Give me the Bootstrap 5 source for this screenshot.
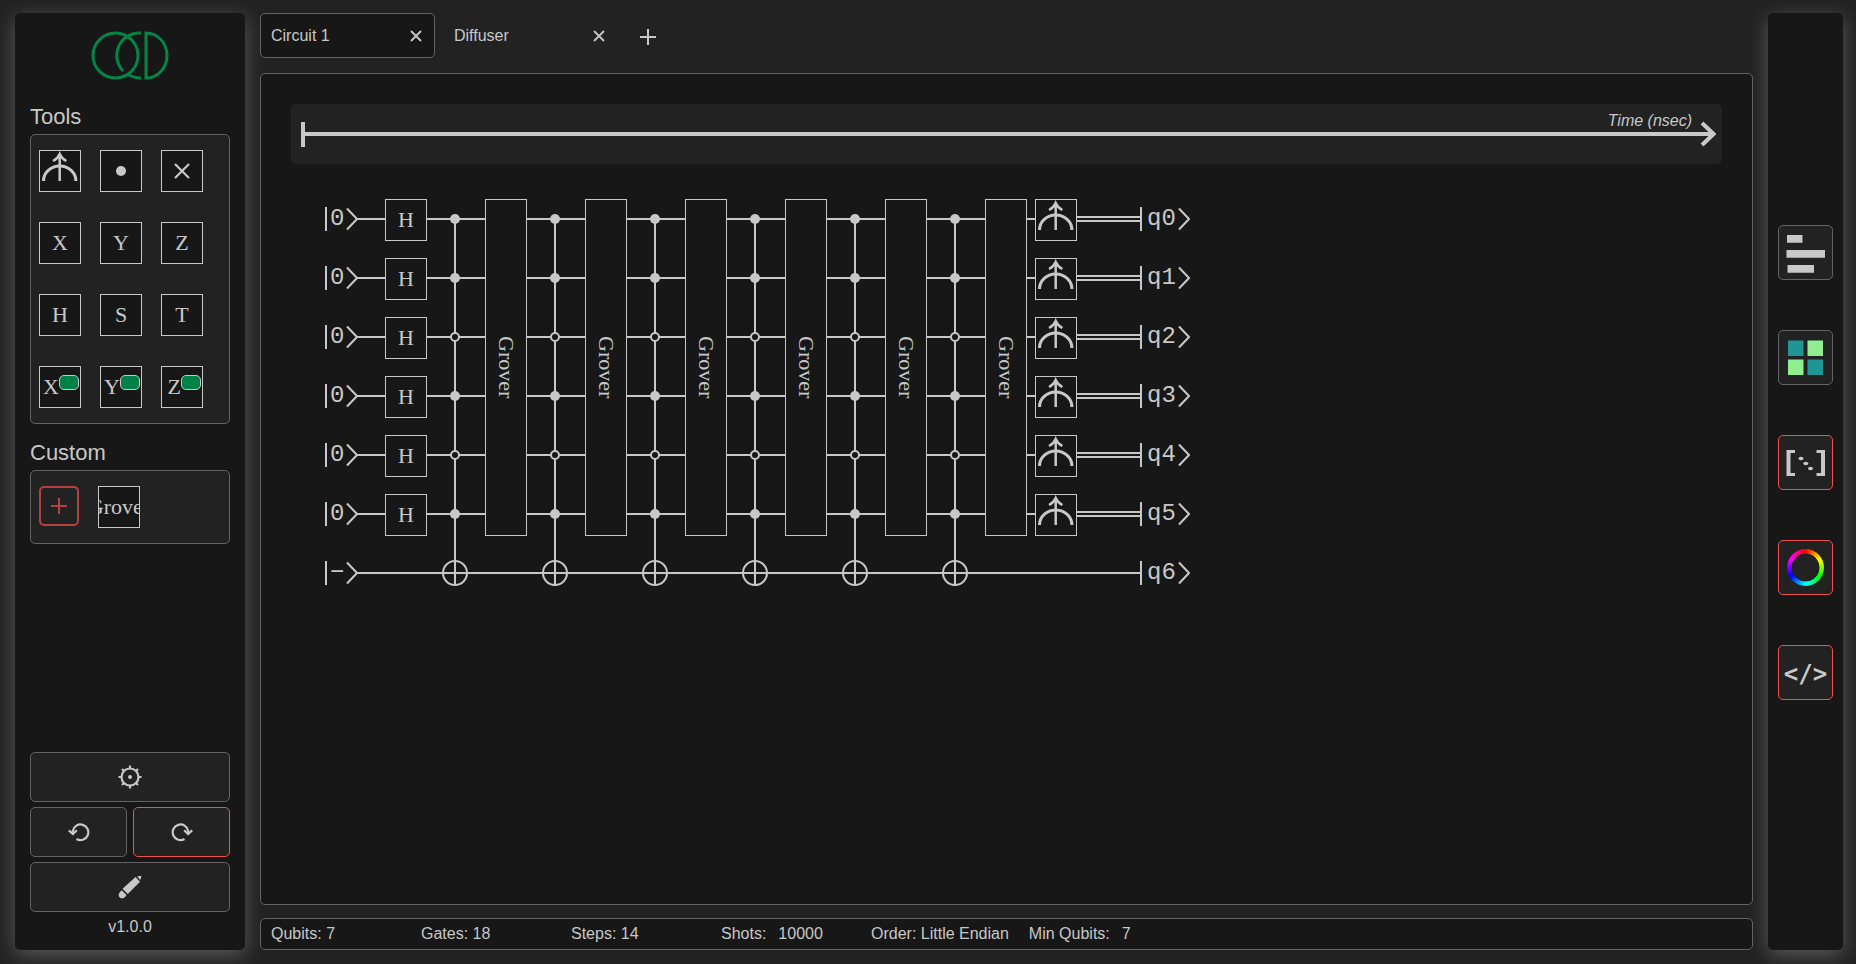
<!DOCTYPE html>
<html lang="en">
<head>
<meta charset="utf-8">
<meta name="viewport" content="width=device-width, initial-scale=1">
<title>Circuit 1</title>
<link rel="stylesheet" href="https://cdn.jsdelivr.net/npm/bootstrap@5.3.0/dist/css/bootstrap.min.css">
<style>
  :root { --ink: #c8c8c8; --panel: #171717; --tile: #222222; --edge: #636363; --alert: #f05050; --brand: #008148; }
  body { background: var(--tile); color: var(--ink); font: 16px/24px "Liberation Sans", Arial, sans-serif; }
  button { color: inherit; font: inherit; padding: 0; }
  svg { display: block; flex: none; }
  .app { padding: 13px 13px 14px 15px; gap: 15px; }
  .side { background: var(--panel); border-radius: 5px; box-shadow: 0 5px 20px rgba(200, 200, 200, .34); }
  .side-tools { width: 230px; padding: 18px 15px 13px; }
  .side-views { width: 75px; gap: 50px; padding-bottom: 38px; }
  .logo { margin-bottom: 25px; overflow: visible; }
  .heading { font-size: 22px; line-height: 24px; font-weight: 400; margin: 0 0 5px; }
  .tray { background: var(--tile); border: 1px solid var(--edge); border-radius: 5px; padding: 15px 8px; margin-bottom: 17px; gap: 30px 19px; }
  .gate { width: 42px; height: 42px; background: var(--panel); border: 1px solid var(--ink); color: var(--ink); border-radius: 0;
    font: 22px/40px "Liberation Serif", "Times New Roman", serif; display: flex; align-items: center; justify-content: center; overflow: hidden; white-space: nowrap; }
  .gate-param { justify-content: flex-end; padding-right: 1px; }
  .pill { width: 20px; height: 15px; background: var(--brand); border: 1px solid var(--ink); border-radius: 5px; margin-bottom: 10px; flex: none; }
  .add-gate { width: 40px; height: 40px; background: var(--tile); border: 2px solid #b54040; border-radius: 5px; color: #b54040; }
  .cmd { background: var(--tile); border: 1px solid var(--edge); border-radius: 5px; display: flex; align-items: center; justify-content: center; }
  .cmd.off { border-color: var(--alert); }
  .cmd-row { height: 50px; }
  .cmd-pair { gap: 6px; }
  .cmd-list { gap: 5px; }
  .cmd-view { width: 55px; height: 55px; }
  .version { line-height: 20px; }
  .code { font: bold 24px/28px "DejaVu Sans Mono", monospace; padding-top: 2px; }
  .wheel { width: 37px; height: 37px; border-radius: 50%; background: radial-gradient(closest-side, var(--tile) 74%, transparent 77%), conic-gradient(red, yellow, lime, cyan, blue, magenta, red); }
  .tabs { gap: 8px; margin-bottom: 15px; }
  .tab-item { width: 175px; height: 45px; padding: 0 12px 0 10px; border: 1px solid transparent; border-radius: 5px; }
  .tab-item.current { background: var(--panel); border-color: var(--edge); }
  .bare { background: none; border: 0; }
  .new-tab { margin: 3px 0 0 14px; }
  .board { background: var(--panel); border: 1px solid var(--edge); border-radius: 5px; padding: 30px; margin-bottom: 13px; }
  .timeline { height: 60px; background: var(--tile); border-radius: 5px; padding: 0 6px 0 10px; }
  .tick { width: 4px; height: 25px; background: var(--ink); }
  .axis { height: 4px; background: var(--ink); }
  .axis-name { right: 30px; top: 5px; font-style: italic; }
  .arrow { margin-left: -14px; }
  .circuit { display: grid; grid-template-columns: 56px repeat(14, 50px) 59px auto; grid-template-rows: repeat(7, 58px); row-gap: 1px; justify-content: start; margin: 26px 0 0 34px; }
  .ket { display: flex; align-items: center; font: 24px/28px "Liberation Mono", "Courier New", monospace; }
  .bar { width: 2px; height: 24px; background: var(--ink); }
  .ket-in .sym { width: 14px; margin: 0 2px 0 3px; }
  .ket-out .sym { width: 29px; margin: 0 2px 0 5px; }
  .wire { height: 2px; background: var(--ink); align-self: center; margin-left: 32px; }
  .wire-measured { margin-right: 25px; }
  .wire-bits { height: 6px; border: solid var(--ink); border-width: 2px 0; align-self: center; margin-left: 25px; }
  .circuit .gate { height: auto; margin: 9px 4px 7px; }
  .circuit .tall { writing-mode: vertical-rl; }
  .link { width: 2px; background: var(--ink); margin: 29px 0 17px 23px; }
  .ctl { width: 10px; height: 10px; border-radius: 50%; background: var(--ink); align-self: center; margin-left: 19px; }
  .ctl.open { background: var(--panel); border: 2px solid var(--ink); }
  .target { width: 26px; height: 26px; border: 2px solid var(--ink); border-radius: 50%; align-self: center; margin-left: 11px; }
  .status { height: 32px; background: var(--panel); border: 1px solid var(--edge); border-radius: 5px; padding: 0 10px; }
  .stat { min-width: 150px; }
  .stat input { width: 60px; background: none; border: 0; color: inherit; padding: 0; margin-left: 12px; }
  .stat-order { padding-right: 20px; }
</style>
</head>
<body>
<svg width="0" height="0" class="position-absolute" aria-hidden="true">
  <symbol id="meter" viewBox="0 0 40 40"><g fill="none" stroke="#c8c8c8">
    <path stroke-width="3" d="M3.500 30A16.200 15 0 0 1 35.900 30"/>
    <path stroke-width="2.500" d="M19.700 30V4M13 10Q17.800 7.500 19.700 3Q21.600 7.500 26.400 10"/></g></symbol>
  <symbol id="close" viewBox="0 0 12 12"><path d="M1 1L11 11M11 1L1 11" stroke="#c8c8c8" stroke-width="1.800"/></symbol>
  <symbol id="chev" viewBox="0 0 12 24"><path d="M1 1.500L11 12L1 22.500" fill="none" stroke="#c8c8c8" stroke-width="2"/></symbol>
</svg>
<div class="app d-flex min-vh-100">
  <aside class="side side-tools d-flex flex-column">
    <svg class="logo align-self-center" width="76" height="49" viewBox="0 0 76 49" fill="none" stroke="#058448" stroke-width="3">
      <circle cx="23.500" cy="24.500" r="22.500"/>
      <path d="M49 2H47A22.500 22.500 0 0 0 31 40M36 43.500Q42 47 49 47"/>
      <path d="M54 2V47A21 22.500 0 0 0 54 2Z"/>
    </svg>
    <h2 class="heading">Tools</h2>
    <div class="tray d-flex flex-wrap">
      <button class="gate" aria-label="Measure"><svg width="40" height="40"><use href="#meter"/></svg></button>
      <button class="gate" aria-label="Control"><svg width="10" height="10"><circle cx="5" cy="5" r="5" fill="#c8c8c8"/></svg></button>
      <button class="gate" aria-label="Swap"><svg width="16" height="16"><path d="M1 1L15 15M15 1L1 15" stroke="#c8c8c8" stroke-width="2.200"/></svg></button>
      <button class="gate">X</button><button class="gate">Y</button><button class="gate">Z</button>
      <button class="gate">H</button><button class="gate">S</button><button class="gate">T</button>
      <button class="gate gate-param">X<span class="pill"></span></button>
      <button class="gate gate-param">Y<span class="pill"></span></button>
      <button class="gate gate-param">Z<span class="pill"></span></button>
    </div>
    <h2 class="heading">Custom</h2>
    <div class="tray d-flex flex-wrap">
      <button class="add-gate d-flex align-items-center justify-content-center" aria-label="Add gate"><svg width="16" height="16"><path d="M8 0V16M0 8H16" stroke="#b54040" stroke-width="2"/></svg></button>
      <button class="gate">Grover</button>
    </div>
    <div class="cmd-list d-flex flex-column mt-auto">
      <button class="cmd cmd-row" aria-label="Settings"><svg width="24" height="24" fill="none" stroke="#c8c8c8" viewBox="-12 -12 24 24"><circle r="8.500" stroke-width="2.200"/><circle r="2" fill="#c8c8c8" stroke="none"/><path stroke-width="2.200" d="M0-8V-11.500M0 8V11.500M-8 0H-11.500M8 0H11.500M5.700 5.700L8 8M-5.700 5.700L-8 8M5.700-5.700L8-8M-5.700-5.700L-8-8"/></svg></button>
      <div class="cmd-row cmd-pair d-flex">
        <button class="cmd w-50" aria-label="Undo"><svg width="22" height="20" viewBox="0 0 22 20" fill="none" stroke="#c8c8c8" stroke-width="2.200"><path d="M8.500 17A7.800 7.800 0 1 0 4.800 9V12.500"/><path d="M.8 8.300L5 12L8.800 8.300"/></svg></button>
        <button class="cmd off w-50" aria-label="Redo"><svg width="22" height="20" viewBox="0 0 22 20" fill="none" stroke="#c8c8c8" stroke-width="2.200"><path d="M13.500 17A7.800 7.800 0 1 1 17.200 9V12.500"/><path d="M21.200 8.300L17 12L13.200 8.300"/></svg></button>
      </div>
      <button class="cmd cmd-row" aria-label="Edit"><svg width="24" height="24" viewBox="0 0 24 24" fill="#c8c8c8"><path d="M23.500 .8L19 1.600L22.300 5ZM17.500 2L22 6.800L9.800 19L4.500 13.800ZM3.800 15.200L8.500 20Q6.500 23.800 3 23.300Q.5 22.500 .6 19.500Q1.300 17 3.800 15.200Z"/></svg></button>
      <div class="version text-center">v1.0.0</div>
    </div>
  </aside>

  <main class="flex-grow-1 d-flex flex-column">
    <nav class="tabs d-flex align-items-center">
      <div class="tab-item current d-flex align-items-center justify-content-between"><button class="bare">Circuit 1</button><button class="bare" aria-label="Close Circuit 1"><svg width="12" height="12"><use href="#close"/></svg></button></div>
      <div class="tab-item d-flex align-items-center justify-content-between"><button class="bare">Diffuser</button><button class="bare" aria-label="Close Diffuser"><svg width="12" height="12"><use href="#close"/></svg></button></div>
      <button class="bare new-tab" aria-label="New circuit"><svg width="16" height="16"><path d="M8 0V16M0 8H16" stroke="#c8c8c8" stroke-width="2"/></svg></button>
    </nav>
    <section class="board flex-grow-1">
      <div class="timeline d-flex align-items-center position-relative">
        <span class="tick"></span><span class="axis flex-grow-1"></span>
        <svg class="arrow" width="16" height="28" viewBox="0 0 16 28"><path d="M2 3L13.500 14L2 25" fill="none" stroke="#c8c8c8" stroke-width="4"/></svg>
        <span class="axis-name position-absolute">Time (nsec)</span>
      </div>
      <div class="circuit" id="circuit"></div>
    </section>
    <footer class="status d-flex align-items-center">
      <span class="stat">Qubits: 7</span>
      <span class="stat">Gates: 18</span>
      <span class="stat">Steps: 14</span>
      <span class="stat"><label for="shots">Shots:</label><input id="shots" type="text" value="10000"></span>
      <span class="stat stat-order">Order: Little Endian</span>
      <span class="stat"><label for="minq">Min Qubits:</label><input id="minq" type="text" value="7"></span>
    </footer>
  </main>

  <aside class="side side-views d-flex flex-column align-items-center justify-content-center">
    <button class="cmd cmd-view" aria-label="Histogram"><svg width="53" height="53" fill="#c8c8c8"><path d="M8 9H23.500V16.700H8ZM7.500 24H46V31.700H7.500ZM8.500 39H35V46.700H8.500Z"/></svg></button>
    <button class="cmd cmd-view" aria-label="Heat map"><svg width="53" height="53"><path fill="#1f9595" d="M9 9.500H24.500V25H9ZM28.500 28.500H44V44H28.500Z"/><path fill="#90ee90" d="M28.500 9.500H44V25H28.500ZM9 28.500H24.500V44H9Z"/></svg></button>
    <button class="cmd cmd-view off" aria-label="Matrix"><svg width="53" height="53" fill="#c8c8c8"><path d="M7.500 14H16V17H11.500V37H16V40H7.500ZM46 14H37.500V17H42V37H37.500V40H46Z"/><ellipse cx="22" cy="22.500" rx="2.500" ry="1.700"/><ellipse cx="26.800" cy="27.500" rx="2.500" ry="1.700"/><ellipse cx="31.500" cy="32.500" rx="2.500" ry="1.700"/></svg></button>
    <button class="cmd cmd-view off" aria-label="Phase wheel"><span class="wheel"></span></button>
    <button class="cmd cmd-view off" aria-label="Code"><span class="code">&lt;/&gt;</span></button>
  </aside>
</div>

<script>
  // Grid columns: 1 input kets, 2-15 the circuit's steps, 16 output wires, 17 output kets.
  const QUBITS = 7, controls = [1, 1, 0, 1, 0, 1];
  const chevron = '<svg width="12" height="24"><use href="#chev"/></svg>';
  const circuit = document.getElementById('circuit');
  function put(cls, row, col, html = '', rowSpan = 1, colSpan = 1) {
    const el = document.createElement('div');
    el.className = cls;
    el.style.gridArea = `${row} / ${col} / span ${rowSpan} / span ${colSpan}`;
    el.innerHTML = html;
    circuit.append(el);
  }
  for (let q = 0; q < QUBITS; q++) {
    const row = q + 1, measured = q < 6;
    put('wire' + (measured ? ' wire-measured' : ''), row, 1, '', 1, measured ? 15 : 16);
    if (measured) put('wire-bits', row, 15, '', 1, 2);
    put('ket ket-in', row, 1, `<span class="bar"></span><span class="sym">${measured ? '0' : '−'}</span>${chevron}`);
    put('ket ket-out', row, 17, `<span class="bar"></span><span class="sym">q${q}</span>${chevron}`);
    if (measured) {
      put('gate', row, 2, 'H');
      put('gate', row, 15, '<svg width="40" height="40"><use href="#meter"/></svg>');
    }
  }
  for (let k = 0; k < 6; k++) {
    const col = 3 + 2 * k;
    put('link', 1, col, '', 7);
    controls.forEach((on, i) => put(on ? 'ctl' : 'ctl open', i + 1, col));
    put('target', 7, col);
    put('gate tall', 1, col + 1, 'Grover', 6);
  }
</script>
<script src="https://cdn.jsdelivr.net/npm/bootstrap@5.3.0/dist/js/bootstrap.bundle.min.js"></script>
</body>
</html>
